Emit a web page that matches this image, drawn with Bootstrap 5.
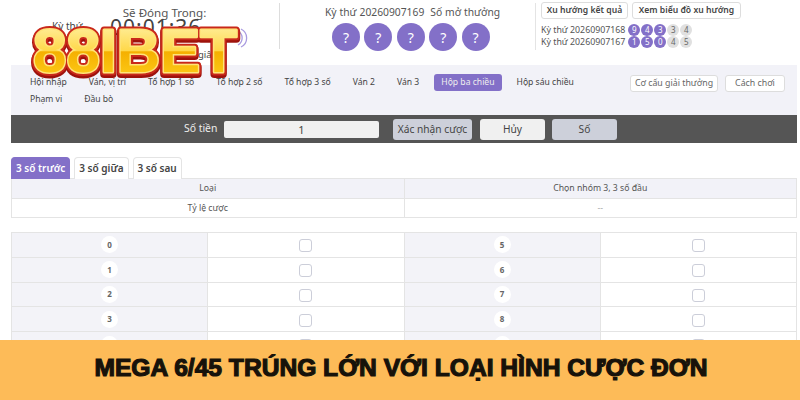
<!DOCTYPE html>
<html lang="vi">
<head>
<meta charset="utf-8">
<title>Mega 6/45</title>
<link href="https://cdn.jsdelivr.net/npm/bootstrap@5.3.0/dist/css/bootstrap.min.css" rel="stylesheet">
<style>
html,body{width:800px;height:400px;overflow:hidden;background:#fff}
body{font-family:"Noto Sans","Open Sans",sans-serif;font-size:9px;color:#444;position:relative}
.stage{height:340px;overflow:hidden}
.topzone{height:65px;padding:3px 0 0 0}
.timerbox{width:280px;height:46px;border-right:1px solid #ddd;position:relative;text-align:center}
.timerbox h6{font-size:11.6px;font-weight:400;margin:0;padding-top:1px;color:#555;line-height:17px;padding-left:50px}
.kythu{position:absolute;left:52px;top:16px;font-size:10px}
.clock{position:absolute;left:110px;top:11px;font-size:21px;color:#444;letter-spacing:1px;line-height:26px}
.giay{position:absolute;left:198px;top:45px;font-size:9.5px}
.snd{position:absolute;left:236px;top:24px}
.drawbox{width:256px;height:47px;border-right:1px solid #e4e4e4;text-align:center}
.drawbox p{margin:0;font-size:10.3px;line-height:16px;padding-top:1px;word-spacing:.3px;color:#555;padding-left:10px}
.balls{gap:4.4px;margin-top:3px;padding-left:52px}
.ball{width:28px;height:28px;border-radius:50%;background:#8370c8;color:#fff;font-size:14px;display:flex;align-items:center;justify-content:center}
.histbox{padding-left:5px;margin-top:-1px}
.tbtn{font-size:8.6px;font-weight:600;padding:0;height:17px;line-height:15px;background:#fff;border:1px solid #ddd;border-radius:3px;color:#444;white-space:nowrap}
.t1{width:87px}.t2{width:109px}
.histrow{font-size:8.8px;line-height:12px;color:#555;gap:1px}
.histrow span.lbl{margin-right:2px}
.histtop{margin-bottom:5px}
.dot{width:12px;height:12px;border-radius:50%;font-size:8px;line-height:12px;text-align:center;background:#8370c8;color:#fff}
.dot.off{background:#e0e0e0;color:#666}
.navband{margin-left:11px;margin-right:3px;height:50px;background:#f2f2f8;position:relative;padding:9px 0 0 19px}
.navband .nav{width:565px;column-gap:22px}
.navband .nav-link{padding:0;font-size:8.6px;line-height:17px;height:17px;color:#444;white-space:nowrap}
.navband .nav-pills .nav-link.active{background:#8370c8;color:#eee;padding:0 7px;border-radius:3px;margin:0 -7px 0 -7px}
.ruleset{position:absolute;right:12px;top:10px;gap:7px}
.rbtn{font-size:8.8px;height:17px;line-height:15px;padding:0;background:#fff;border:1px solid #ddd;border-radius:3px;color:#666;white-space:nowrap}
.r1{width:88px}.r2{width:60px}
.betbar{margin:0 3px 0 11px;height:28px;background:#555;color:#eee;font-size:10.4px;padding-left:173px}
.betbar label{width:40px}
.amt{width:155px;height:17px;background:#f0f0f0;border:0;border-radius:2px;text-align:center;font-size:11px;line-height:17px;color:#444;margin-right:14px}
.bbtn{height:21px;border:0;border-radius:3px;padding:0;font-size:10.2px;line-height:21px;color:#444}
.b1{width:79px;background:#cdd0da;margin-right:8px}
.b2{width:65px;background:#f0f0f0;margin-right:7px}
.b3{width:65px;background:#cdd0da}
.tabs-w{margin:14px 3px 0 11px;border-bottom:0;gap:4px;height:21px;flex-wrap:nowrap}
.tabs-w .nav-link{padding:0 4px;height:22px;line-height:21px;font-size:10px;font-weight:600;color:#444;background:#fff;border:1px solid #e4e4e4;border-bottom:0;border-radius:4px 4px 0 0;white-space:nowrap;margin:0}
.tabs-w .nav-link.active{background:#8370c8;color:#fff;border-color:#8370c8}
.grid1{margin:0 3px 0 11px;width:786px;table-layout:fixed;border-color:#e4e4e4;margin-bottom:14px;font-size:8.7px}
.grid1 td{padding:0;height:19.5px;line-height:18px;text-align:center;color:#555;background:#fff}
.grid1 tr:first-child td{background:#f2f2f8}
.grid1 td.nil{color:#aaa}
.grid2{margin:0 3px 0 11px;width:786px;table-layout:fixed;border-color:#e4e4e4}
.grid2 td{padding:0;height:24.8px;text-align:center;vertical-align:middle;background:#fff}
.grid2 td.nm{background:#f3f3f8}
.numc{display:inline-flex;width:17px;height:17px;border-radius:50%;background:#fff;font-size:8px;font-weight:700;color:#666;align-items:center;justify-content:center}
.grid2 .form-check-input{width:13px;height:13px;margin:2px 0 0;border:1px solid #ccced9;border-radius:3px;display:inline-block}
.banner{height:60px;background:#fdbb58;display:flex;align-items:center;justify-content:center;padding-left:2px}
.banner h1{margin:0;font-family:"Liberation Sans",sans-serif;font-weight:700;font-size:24.6px;color:#17120a;letter-spacing:0;-webkit-text-stroke:1.2px #17120a;white-space:nowrap;line-height:34px;padding-bottom:4px}
.logo{position:absolute;left:24px;top:18px}
</style>
</head>
<body>
<div class="stage">
  <div class="topzone d-flex">
    <div class="timerbox">
      <h6>Sẽ Đóng Trong:</h6>
      <span class="kythu">Kỳ thứ</span>
      <span class="clock">00:01:36</span>
      <span class="giay">giây</span>
      <svg class="snd" width="14" height="22" viewBox="0 0 14 22" fill="none" stroke="#a99be0" stroke-width="1.3"><path d="M2 4a8 8 0 0 1 0 14M5 2a10 10 0 0 1 0 18"/></svg>
    </div>
    <div class="drawbox">
      <p>Kỳ thứ 20260907169&nbsp;&nbsp;Số mở thưởng</p>
      <div class="balls d-flex">
        <div class="ball">?</div><div class="ball">?</div><div class="ball">?</div><div class="ball">?</div><div class="ball">?</div>
      </div>
    </div>
    <div class="histbox">
      <div class="d-flex gap-1 histtop">
        <button class="btn tbtn t1">Xu hướng kết quả</button>
        <button class="btn tbtn t2">Xem biểu đồ xu hướng</button>
      </div>
      <div class="histrow d-flex align-items-center"><span class="lbl">Kỳ thứ 20260907168</span><span class="dot">9</span><span class="dot">4</span><span class="dot">3</span><span class="dot off">3</span><span class="dot off">4</span></div>
      <div class="histrow d-flex align-items-center"><span class="lbl">Kỳ thứ 20260907167</span><span class="dot">1</span><span class="dot">5</span><span class="dot">0</span><span class="dot off">4</span><span class="dot off">5</span></div>
    </div>
  </div>

  <div class="navband">
    <ul class="nav nav-pills">
      <li class="nav-item"><a class="nav-link" href="#">Hội nhập</a></li>
      <li class="nav-item"><a class="nav-link" href="#">Ván, vị trí</a></li>
      <li class="nav-item"><a class="nav-link" href="#">Tổ hợp 1 số</a></li>
      <li class="nav-item"><a class="nav-link" href="#">Tổ hợp 2 số</a></li>
      <li class="nav-item"><a class="nav-link" href="#">Tổ hợp 3 số</a></li>
      <li class="nav-item"><a class="nav-link" href="#">Ván 2</a></li>
      <li class="nav-item"><a class="nav-link" href="#">Ván 3</a></li>
      <li class="nav-item"><a class="nav-link active" href="#">Hộp ba chiều</a></li>
      <li class="nav-item"><a class="nav-link" href="#">Hộp sáu chiều</a></li>
      <li class="nav-item"><a class="nav-link" href="#">Phạm vi</a></li>
      <li class="nav-item"><a class="nav-link" href="#">Đầu bò</a></li>
    </ul>
    <div class="ruleset d-flex">
      <button class="btn rbtn r1">Cơ cấu giải thưởng</button>
      <button class="btn rbtn r2">Cách chơi</button>
    </div>
  </div>

  <div class="betbar d-flex align-items-center">
    <label>Số tiền</label>
    <div class="amt">1</div>
    <button class="btn bbtn b1">Xác nhận cược</button>
    <button class="btn bbtn b2">Hủy</button>
    <button class="btn bbtn b3">Số</button>
  </div>

  <ul class="nav nav-tabs tabs-w">
    <li class="nav-item"><a class="nav-link active" href="#">3 số trước</a></li>
    <li class="nav-item"><a class="nav-link" href="#">3 số giữa</a></li>
    <li class="nav-item"><a class="nav-link" href="#">3 số sau</a></li>
  </ul>

  <table class="table table-bordered grid1">
    <tr><td>Loại</td><td>Chọn nhóm 3, 3 số đầu</td></tr>
    <tr><td>Tỷ lệ cược</td><td class="nil">--</td></tr>
  </table>

  <table class="table table-bordered grid2">
    <tr><td class="nm"><span class="numc">0</span></td><td><input class="form-check-input" type="checkbox"></td><td class="nm"><span class="numc">5</span></td><td><input class="form-check-input" type="checkbox"></td></tr>
    <tr><td class="nm"><span class="numc">1</span></td><td><input class="form-check-input" type="checkbox"></td><td class="nm"><span class="numc">6</span></td><td><input class="form-check-input" type="checkbox"></td></tr>
    <tr><td class="nm"><span class="numc">2</span></td><td><input class="form-check-input" type="checkbox"></td><td class="nm"><span class="numc">7</span></td><td><input class="form-check-input" type="checkbox"></td></tr>
    <tr><td class="nm"><span class="numc">3</span></td><td><input class="form-check-input" type="checkbox"></td><td class="nm"><span class="numc">8</span></td><td><input class="form-check-input" type="checkbox"></td></tr>
    <tr><td class="nm"><span class="numc">4</span></td><td><input class="form-check-input" type="checkbox"></td><td class="nm"><span class="numc">9</span></td><td><input class="form-check-input" type="checkbox"></td></tr>
  </table>
</div>

<div class="banner"><h1>MEGA 6/45 TRÚNG LỚN VỚI LOẠI HÌNH CƯỢC ĐƠN</h1></div>

<svg class="logo" width="224" height="64" viewBox="0 0 224 64">
  <defs>
    <linearGradient id="lg" x1="0" y1="0" x2="0" y2="1">
      <stop offset="0" stop-color="#fff6b8"/><stop offset=".5" stop-color="#ffd84a"/><stop offset=".52" stop-color="#f5b000"/><stop offset="1" stop-color="#ffd21f"/>
    </linearGradient>
  </defs>
  <text x="9" y="56" font-family="Liberation Sans" font-weight="700" font-size="62" textLength="204" lengthAdjust="spacingAndGlyphs" fill="#9d120c" stroke="#9d120c" stroke-width="8" stroke-linejoin="round">88IBET</text>
  <text x="9" y="54" font-family="Liberation Sans" font-weight="700" font-size="62" textLength="204" lengthAdjust="spacingAndGlyphs" fill="#c9281a" stroke="#c9281a" stroke-width="7" stroke-linejoin="round">88IBET</text>
  <text x="9" y="54" font-family="Liberation Sans" font-weight="700" font-size="62" textLength="204" lengthAdjust="spacingAndGlyphs" fill="#ffd84a" stroke="#ffe47a" stroke-width="3" stroke-linejoin="round">88IBET</text>
  <text x="9" y="54" font-family="Liberation Sans" font-weight="700" font-size="62" textLength="204" lengthAdjust="spacingAndGlyphs" fill="url(#lg)">88IBET</text>
</svg>
</body>
</html>
